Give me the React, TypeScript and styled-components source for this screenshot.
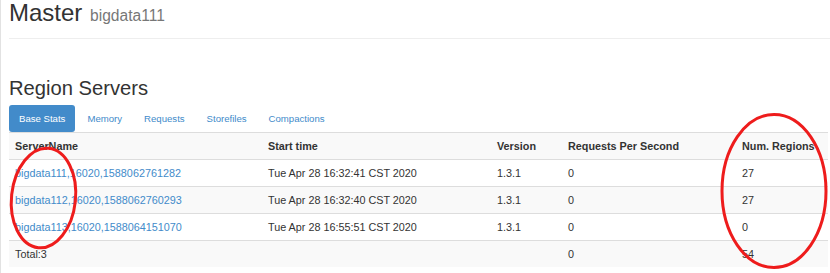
import React from 'react';
import styled, { createGlobalStyle } from 'styled-components';

type ServerRow = {
  name: string;
  start: string;
  version: string;
  rps: string;
  regions: string;
};

const servers: ServerRow[] = [
  {
    name: 'bigdata111,16020,1588062761282',
    start: 'Tue Apr 28 16:32:41 CST 2020',
    version: '1.3.1',
    rps: '0',
    regions: '27',
  },
  {
    name: 'bigdata112,16020,1588062760293',
    start: 'Tue Apr 28 16:32:40 CST 2020',
    version: '1.3.1',
    rps: '0',
    regions: '27',
  },
  {
    name: 'bigdata113,16020,1588064151070',
    start: 'Tue Apr 28 16:55:51 CST 2020',
    version: '1.3.1',
    rps: '0',
    regions: '0',
  },
];

const tabs = ['Base Stats', 'Memory', 'Requests', 'Storefiles', 'Compactions'];

const GlobalStyle = createGlobalStyle`
  html, body {
    margin: 0;
    padding: 0;
    background: #fff;
  }
  body {
    font-family: "Liberation Sans", Arial, sans-serif;
    color: #333;
    overflow: hidden;
  }
`;

const Page = styled.div`
  position: relative;
  height: 273px;
  border-left: 1px solid #e2e2e2;
  padding-left: 8px;
  box-sizing: border-box;
`;

const PageHeader = styled.div`
  padding-bottom: 12px;
  border-bottom: 1px solid #eee;
`;

const Title = styled.h1`
  margin: 0;
  font-size: 24px;
  line-height: 26px;
  height: 26px;
  font-weight: 400;
  color: #333;
`;

const Small = styled.small`
  font-size: 15.6px;
  line-height: 1;
  color: #777;
  margin-left: 1px;
`;

const SectionTitle = styled.h2`
  margin: 38px 0 6px;
  font-size: 20.2px;
  line-height: 22px;
  font-weight: 400;
`;

const Nav = styled.ul`
  display: flex;
  gap: 2px;
  margin: 0;
  padding: 0;
  list-style: none;
`;

const Tab = styled.li<{ $active?: boolean }>`
  height: 27px;
  padding: 0 10px;
  display: flex;
  align-items: center;
  border-radius: 3px;
  font-size: 9.6px;
  color: ${(p) => (p.$active ? '#fff' : '#428bca')};
  background: ${(p) => (p.$active ? '#428bca' : 'transparent')};
`;

const Table = styled.table`
  width: 819px;
  table-layout: fixed;
  border-collapse: collapse;
  border-spacing: 0;
  font-size: 10.8px;
`;

const Row = styled.tr<{ $striped?: boolean }>`
  background: ${(p) => (p.$striped ? '#f9f9f9' : '#fff')};
`;

const Th = styled.th`
  text-align: left;
  font-weight: 700;
  padding: 6px 6px;
  line-height: 14px;
  border-top: 1px solid #ddd;
  white-space: nowrap;
`;

const Td = styled.td`
  padding: 6px 6px;
  line-height: 14px;
  border-top: 1px solid #ddd;
  white-space: nowrap;
`;

const Link = styled.a`
  color: #428bca;
  text-decoration: none;
`;

const Marks = styled.svg`
  position: absolute;
  left: -1px;
  top: 0;
  width: 830px;
  height: 273px;
  pointer-events: none;
`;

export default function App() {
  return (
    <>
      <GlobalStyle />
      <Page>
        <PageHeader>
          <Title>
            Master <Small>bigdata111</Small>
          </Title>
        </PageHeader>
        <SectionTitle>Region Servers</SectionTitle>
        <Nav>
          {tabs.map((t, i) => (
            <Tab key={t} $active={i === 0}>
              {t}
            </Tab>
          ))}
        </Nav>
        <Table>
          <colgroup>
            <col style={{ width: 253 }} />
            <col style={{ width: 229 }} />
            <col style={{ width: 71 }} />
            <col style={{ width: 174 }} />
            <col style={{ width: 92 }} />
          </colgroup>
          <tbody>
            <Row $striped>
              <Th>ServerName</Th>
              <Th>Start time</Th>
              <Th>Version</Th>
              <Th>Requests Per Second</Th>
              <Th>Num. Regions</Th>
            </Row>
            {servers.map((s, i) => (
              <Row key={s.name} $striped={i % 2 === 1}>
                <Td>
                  <Link href="#">{s.name}</Link>
                </Td>
                <Td>{s.start}</Td>
                <Td>{s.version}</Td>
                <Td>{s.rps}</Td>
                <Td>{s.regions}</Td>
              </Row>
            ))}
            <Row $striped>
              <Td>Total:3</Td>
              <Td />
              <Td />
              <Td>0</Td>
              <Td>54</Td>
            </Row>
          </tbody>
        </Table>
        <Marks viewBox="0 0 830 273">
          <ellipse
            cx="43.5"
            cy="198"
            rx="32"
            ry="50"
            transform="rotate(6 43.5 198)"
            fill="none"
            stroke="#ee1c1c"
            strokeWidth="3"
          />
          <ellipse
            cx="774"
            cy="191"
            rx="52"
            ry="76.5"
            fill="none"
            stroke="#ee1c1c"
            strokeWidth="3"
          />
        </Marks>
      </Page>
    </>
  );
}
